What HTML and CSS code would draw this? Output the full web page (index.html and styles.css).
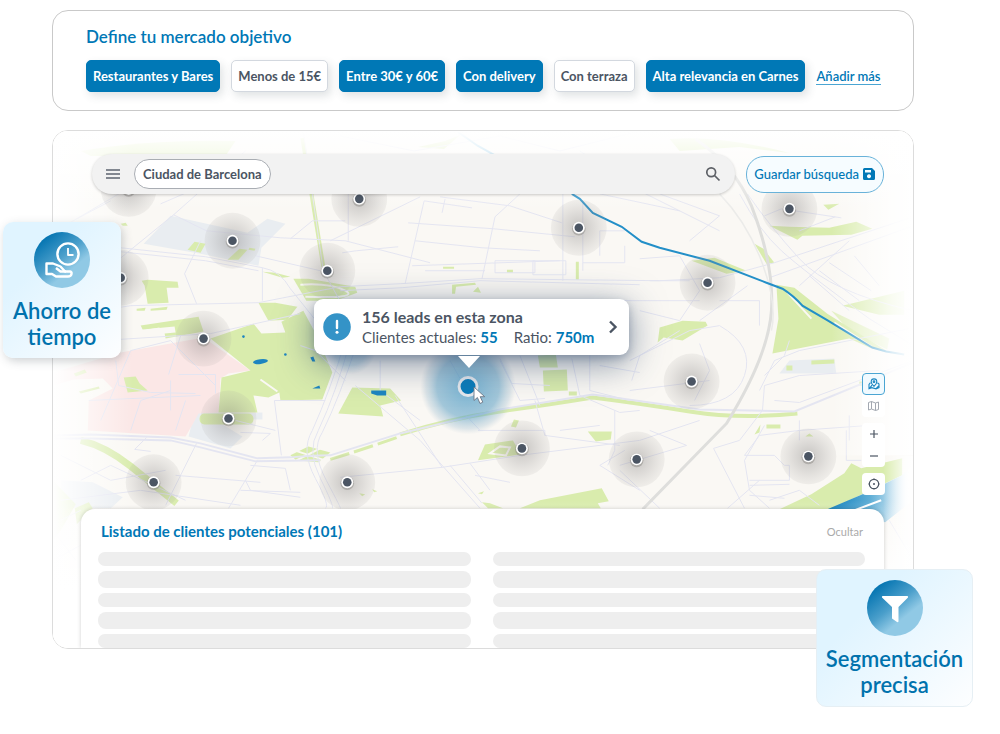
FILE: index.html
```html
<!DOCTYPE html>
<html lang="es">
<head>
<meta charset="utf-8">
<meta name="viewport" content="width=device-width, initial-scale=1">
<title>Mercado objetivo</title>
<link rel="stylesheet" href="styles.css">
</head>
<body>
<main class="page">
  <section class="filters">
    <h1 class="filters-title">Define tu mercado objetivo</h1>
    <div class="filters-row">
      <button type="button" class="pill pill-on">Restaurantes y Bares</button>
      <button type="button" class="pill">Menos de 15€</button>
      <button type="button" class="pill pill-on">Entre 30€ y 60€</button>
      <button type="button" class="pill pill-on">Con delivery</button>
      <button type="button" class="pill">Con terraza</button>
      <button type="button" class="pill pill-on">Alta relevancia en Carnes</button>
      <a class="add-more" href="#">Añadir más</a>
    </div>
  </section>

  <section class="explorer">
    <div class="frame">
      <svg class="map" viewBox="52 130 862 518" preserveAspectRatio="xMidYMin slice" aria-hidden="true">
        <defs>
          <radialGradient id="halo">
            <stop offset="0" stop-color="#6f6c6c" stop-opacity=".38"/>
            <stop offset=".55" stop-color="#8b8888" stop-opacity=".25"/>
            <stop offset="1" stop-color="#a5a2a0" stop-opacity=".13"/>
          </radialGradient>
          <radialGradient id="haloBlue">
            <stop offset="0" stop-color="#4a9cc8" stop-opacity=".75"/>
            <stop offset=".65" stop-color="#5b9fc4" stop-opacity=".55"/>
            <stop offset=".88" stop-color="#8fb4cb" stop-opacity=".28"/>
            <stop offset="1" stop-color="#a9bccb" stop-opacity="0"/>
          </radialGradient>
          <linearGradient id="fadeL"><stop offset="0" stop-color="#fff"/><stop offset=".2" stop-color="#fff" stop-opacity=".8"/><stop offset="1" stop-color="#fff" stop-opacity="0"/></linearGradient>
          <linearGradient id="fadeR"><stop offset="0" stop-color="#fff" stop-opacity="0"/><stop offset=".75" stop-color="#fff" stop-opacity=".85"/><stop offset="1" stop-color="#fff"/></linearGradient>
          <linearGradient id="fadeT" x2="0" y2="1"><stop offset="0" stop-color="#fff"/><stop offset=".35" stop-color="#fff" stop-opacity=".7"/><stop offset="1" stop-color="#fff" stop-opacity="0"/></linearGradient>
          <linearGradient id="fadeB" x2="0" y2="1"><stop offset="0" stop-color="#fff" stop-opacity="0"/><stop offset="1" stop-color="#fff"/></linearGradient>
          <linearGradient id="sea"><stop offset="0" stop-color="#0a7cba"/><stop offset=".5" stop-color="#5faed6"/><stop offset=".95" stop-color="#fff"/></linearGradient>
          <g id="pin">
            <circle r="28" fill="url(#halo)"/>
            <circle r="6.800" cy="1" fill="#8c8986" opacity=".5"/>
            <circle r="6" fill="#fff"/>
            <circle r="4.300" fill="#4b5563"/>
          </g>
        </defs>
        <rect x="52" y="130" width="862" height="518" fill="#faf8f4"/>

        <g fill="#e9edf1">
          <path d="M170 215 247 232 267 218 285 223 261 247 258 265 200 253 143 243Z"/>
          <path d="M194 412h68v7h-10v5h-30l20 12-12 12-42-12Z"/>
          <path d="M780 373 790 360 835 358 837 373Z"/>
          <path d="M60 480 92 482 122 497 110 508 60 508Z"/>
        </g>
        <path fill="#fbe7e6" d="M52 372 120 352 203 337 250 370 228 373 220 378 218 412 198 413 192 424 185 436 87 430 88 400 112 388 102 378 73 379 52 385Z"/>

        <g fill="#d9ecad">
          <path d="M80 150Q150 138 235 140L225 155H90Z" opacity=".9"/>
          <path d="M418 146 445 140 460 134 444 148Z"/>
          <path d="M670 138Q720 134 790 152L740 146 680 150Z"/>
          <path d="M187 249 194 241 205 243 200 252Z"/>
          <path d="M227 259 239 248 247 249 238 259Z"/>
          <path d="M120 223 125 222 127 225 122 225Z"/>
          <path d="M249 247 255 248 254 250 248 249Z"/>
          <path d="M141 280 147 279 177 281 178 287 166 287 168 302 147 303 144 285Z"/>
          <path d="M136 308 145 307 144 310 136 310ZM150 308 167 306 166 309 150 310Z"/>
          <path d="M140 325 198 316 203 331 165 338 164 333 175 332 174 326 142 329Z"/>
          <path d="M258 302 275 302 297 306 287 319 268 320Z"/>
          <path d="M293 278 308 278 355 286 357 292 335 300 306 300Z"/>
          <path d="M262 271 275 272 290 276 282 277Z"/>
          <path d="M210 338 253 323 261 333 285 332 281 321 303 310 318 338 332 372 322 399 280 400 279 392 268 397 253 395 257 412 218 412 221 377 250 370Z"/>
          <rect x="199" y="413" width="54" height="11" rx="5"/>
          <path d="M123 377 135 376 139 383 147 390 127 392Z"/>
          <path d="M73 373 84 369 86 372 75 376ZM78 391 98 386 99 388 80 393Z"/>
          <path d="M352 387 390 388 401 400 380 405 383 416 338 413Z"/>
          <path d="M290 455 308 446 330 452 318 462 296 460Z"/>
          <path d="M538 355 556 354 558 367 540 367ZM543 370 567 369 568 390 544 391ZM569 391 577 391 577 395 569 395Z"/>
          <path d="M511 426 514 419 519 420 516 427ZM588 431 612 431 611 439 596 441Z"/>
          <path d="M478 460 485 444 513 440 521 454Z"/>
          <path d="M520 508 540 500 602 488 609 501 598 503 601 508ZM482 502 490 503 503 508 488 508Z"/>
          <path d="M359 493 365 494 362 496ZM372 489 377 491 374 492ZM478 493 484 491 482 494Z"/>
          <path d="M452 284 475 282 476 284 456 286 455 293 452 293ZM473 291 478 286 481 292Z"/>
          <path d="M443 266h11v2h-11ZM507 269h6v3h-6ZM576 261h3v18h-3Z"/>
          <path d="M770 225 790 226 830 227 857 221 873 228 852 234 803 235 798 239Z"/>
          <path d="M755 243 764 248 775 262 767 263Z"/>
          <path d="M692 260 715 257 747 270 727 273Z"/>
          <path d="M824 204 840 203 829 209Z"/>
          <path d="M777 284 795 287 828 313 887 350 870 347 850 338 773 353 779 318Z"/>
          <path d="M843 305 905 290 905 314 880 314Z"/>
          <path d="M832 310 890 338 888 349 850 330Z" opacity=".7"/>
          <path d="M660 327 683 320 706 321 708 325 683 340 664 337 658 342Z"/>
          <path d="M787 365h6v5h-6ZM812 360 835 359 835 363 812 364Z"/>
          <path d="M755 434 761 424 760 432ZM767 424h14v4h-14ZM806 436 810 433 814 436ZM860 381h5v4h-5Z"/>
          <path d="M780 509 812 494 845 473 852 463 862 468 903 458 903 475 850 500 830 509Z"/>
          <path d="M52 480 75 504 60 530 52 540Z" opacity=".8"/>
          <path d="M74 508 88 502 92 508 76 524Z"/>
        </g>
        <g fill="none" stroke="#d9ecad">
          <path d="M302 137 323 266" stroke-width="4"/>
          <path d="M80 440Q105 446 130 466T176 503" stroke-width="7"/>
          <path d="M330 459Q360 450 400 436" stroke-width="3" stroke-dasharray="20 5"/>
          <path d="M400 434Q450 418 500 411T593 397Q640 403 690 411T798 413" stroke-width="4"/>
        </g>
        <g fill="none" stroke="#faf8f4" stroke-width="2">
          <path d="M146 330 158 328 160 335 148 334M260 379 277 391M300 284Q330 282 345 290T305 296"/>
          <path d="M294 450 325 460M296 460 322 447M490 453 500 446 510 447 506 455Z"/>
          <path d="M788 292 812 318M835 322 872 346"/>
        </g>
        <path fill="url(#sea)" d="M828 509 868 492 903 475 914 465V500L886 522Z"/>
        <path d="M850 512 882 500" stroke="#fff" stroke-width="2"/>

        <g fill="none" stroke="#e4e5f1" stroke-width="1">
          <path d="M52 240 120 247 205 256 262 267Q280 270 290 288L314 318M52 243 120 251 205 260 258 270"/>
          <path d="M52 317 130 305 258 302 340 286 400 283 480 278 660 280 720 277 775 262 914 216M100 340 210 333 300 313M340 290 402 287 480 280 640 284"/>
          <path d="M103 271 173 214 245 150M173 214 206 230 280 237 345 240M76 218 110 200M52 232 140 180M160 203 190 190"/>
          <path d="M290 238 312 220 345 220M255 255 320 270M262 300 262 267M184 273 196 303M184 273 200 240"/>
          <path d="M303 130 323 270 345 310M330 240 420 196M348 190V240M345 240 430 262M342 252 356 250 398 246"/>
          <path d="M424 200 405 283M424 200 472 207M408 222 494 228 575 236M415 240 482 247 540 250M412 265 560 260M520 193 495 216 482 278M440 196 510 205 562 222M445 198 442 212"/>
          <path d="M495 260h40v12h-40ZM533 260h33v14h-33ZM425 270h60M563 193V280M583 200V270M600 255V230H625M583 262H625V245"/>
          <path d="M340 135 414 150 500 135 560 150 640 130M580 150 640 190 720 230M600 193 680 210M660 193 720 215 690 240"/>
          <path d="M740 193Q760 230 782 250T870 318L914 345M748 193Q770 225 800 258T914 310"/>
          <path d="M765 215 782 208 842 217M800 230 836 216M770 277 914 225M810 275 850 310M820 270 860 300M830 262 872 290M855 255 880 285M800 285 850 240"/>
          <path d="M640 258 680 255 700 290 680 320 640 310M650 280H690M720 300H760V325M700 320 748 285"/>
          <path d="M52 435 90 434 170 437 200 443 257 458 290 457Q310 455 330 455L400 433 500 409 593 394 700 409 795 411 914 362M52 438 90 438 170 440 200 447 255 461 320 460" stroke-width="2"/>
          <path d="M345 340Q330 390 312 430Q300 450 315 478T325 508M350 340Q336 392 318 430Q306 450 320 478T332 508M356 345Q340 395 322 432Q310 450 326 480T340 508"/>
          <path d="M274 400 281 455M274 400H325M257 460 228 508M235 420 275 430M240 432 270 433 262 440"/>
          <path d="M100 420 130 350 170 340 215 385M88 400 200 395M115 360 118 385 150 392 195 393M178 374H215V393M168 374 180 335M170 410V380M130 430 140 400 170 390M175 430 185 400"/>
          <path d="M196 443 165 505M146 437 134 449 150 451M60 455 110 480 165 470M80 480 110 465 185 500M60 500 140 490 240 505M175 475 260 482M240 490 300 492M250 465 285 468 290 490M245 480 250 490 300 497"/>
          <path d="M395 395 442 467 340 477M355 385 420 440 480 508M442 467 520 455 640 440 700 420M450 465 482 503M470 463 490 490M475 475 510 482M478 430H545V435M480 430 466 415"/>
          <path d="M535 400 545 435 620 445M520 355 540 405M500 360 520 400 545 398M580 395 620 412 640 410M615 410V450L608 465M600 425 560 430M650 430 687 445 620 465"/>
          <path d="M640 490 600 465 625 450M620 470 660 508M630 360 690 330 720 325Q755 345 745 375T690 405M700 343 710 370 695 400M630 390 710 380"/>
          <path d="M760 390 775 360 800 350 910 328M765 375 785 355 790 340M763 410 765 385 800 375 880 370M775 400 800 402 914 360M763 410 740 440 714 448 745 508M745 455 760 435 800 430 870 425"/>
          <path d="M745 455H775L785 465H790V480H750M750 485 790 484M750 495 785 498M765 425 745 460 750 490 770 508M800 420V440M850 415V440M770 500 800 490 820 505M728 508 760 480M847 430V460H862M680 330 640 355 632 380"/>
          <path d="M380 300H700M300 345 315 350 345 380M380 360V390L420 420M450 360 460 378M500 358 512 383 550 385M590 355V390L630 400M600 365 640 372M572 358 580 395"/>
          <path d="M52 530 75 560M60 520 80 510M52 560 80 545M890 520 914 560"/>
        </g>
        <path d="M696 138Q735 165 752 205Q775 265 772 310T727 423L643 509" fill="none" stroke="#dededc" stroke-width="3"/>
        <path d="M720 193Q748 222 763 263T772 330" fill="none" stroke="#ebebe9" stroke-width="1.500"/>
        <path d="M572 193 580 198 593 212 622 226 642 241 660 247 710 260 767 282 783 288Q794 295 803 305L827 319 873 347 887 351 905 354" fill="none" stroke="#238fc8" stroke-width="2"/>
        <path d="M458 131 478 145 496 155" fill="none" stroke="#7cc0e4" stroke-width="2"/>
        <g fill="#1d85c0">
          <ellipse cx="260" cy="361" rx="7.500" ry="2.400" transform="rotate(-8 260 361)"/>
          <circle cx="243" cy="336" r="1.300"/><circle cx="285" cy="354" r="1.300"/>
          <path d="M310 357 313 356 315 361 312 361ZM312 388 319 385 320 388ZM371 390 386 390 386 395 377 395 371 393Z"/>
        </g>

        <rect x="52" y="130" width="80" height="518" fill="url(#fadeL)"/>
        <rect x="832" y="130" width="82" height="325" fill="url(#fadeR)"/>
        <rect x="884" y="455" width="30" height="193" fill="url(#fadeR)"/>
        <rect x="52" y="130" width="862" height="80" fill="url(#fadeT)"/>
        <rect x="52" y="500" width="862" height="90" fill="url(#fadeB)"/>
        <rect x="52" y="590" width="862" height="62" fill="#fff"/>

        <use href="#pin" x="128" y="188"/><use href="#pin" x="232" y="240"/><use href="#pin" x="327" y="270"/>
        <use href="#pin" x="359" y="198"/><use href="#pin" x="579" y="227"/><use href="#pin" x="790" y="208"/>
        <use href="#pin" x="708" y="282"/><use href="#pin" x="203" y="338"/><use href="#pin" x="120" y="277"/>
        <use href="#pin" x="692" y="381"/><use href="#pin" x="637" y="459"/><use href="#pin" x="809" y="456"/>
        <use href="#pin" x="228" y="418"/><use href="#pin" x="153" y="482"/><use href="#pin" x="347" y="482"/>
        <use href="#pin" x="522" y="448"/>
        <circle cx="350" cy="348" r="26" fill="url(#haloBlue)" opacity=".5"/>
        <circle cx="468" cy="386" r="48" fill="url(#haloBlue)"/>
        <circle cx="468" cy="386" r="9" fill="#0a7cba" stroke="#e6e9ee" stroke-width="3"/>
      </svg>

      <div class="topbar">
        <form class="search" role="search">
          <button type="button" class="icon-btn" aria-label="Menú">
            <svg width="14" height="10" viewBox="0 0 14 10" stroke="#5d6470" stroke-width="1.400"><path d="M0 1h14M0 5h14M0 9h14"/></svg>
          </button>
          <button type="button" class="city">Ciudad de Barcelona</button>
          <input class="search-input" type="search" aria-label="Buscar zona">
          <button type="button" class="icon-btn" aria-label="Buscar">
            <svg width="16" height="16" viewBox="0 0 16 16" fill="none" stroke="#5d6066" stroke-width="1.700"><circle cx="6.200" cy="6.200" r="4.400"/><path d="m9.500 9.500 5 5"/></svg>
          </button>
        </form>
        <button type="button" class="save">Guardar búsqueda
          <svg width="12" height="12" viewBox="0 0 12 12"><path fill="#0078b6" fill-rule="evenodd" d="M1.500 0H9l3 3v7.500q0 1.500-1.500 1.500h-9Q0 12 0 10.500v-9Q0 0 1.500 0ZM2 2v2.500h6V2ZM6 6.300a2 2 0 1 0 .01 0Z"/></svg>
        </button>
      </div>

      <div class="stage">
        <div class="tools">
          <div class="tool-group">
            <button type="button" class="tool tool-on" aria-label="Mapa de zonas">
              <svg width="12" height="12" viewBox="0 0 12 12" fill="none" stroke="#1b86c1" stroke-width="1.100"><path d="M6 8.300C4 6.500 3.200 5.300 3.200 3.700a2.800 2.800 0 0 1 5.600 0C8.800 5.300 8 6.500 6 8.300Z"/><circle cx="6" cy="3.700" r=".8"/><path d="M2.500 4.700 1 6.500v4.200l2.800-1 4.200 1.200 3-1.200V6L9.400 4.700M1.500 10.300 4 7.200M8 10.700 10.700 8"/></svg>
            </button>
            <button type="button" class="tool" aria-label="Mapa">
              <svg width="11" height="10" viewBox="0 0 11 10" fill="none" stroke="#a3a8b1" stroke-width="1"><path d="m.5 1.500 3-1 4 1.500 3-1v7.500l-3 1-4-1.500-3 1ZM3.500.5V8M7.500 2v7.500"/></svg>
            </button>
          </div>
          <div class="tool-group">
            <button type="button" class="tool" aria-label="Acercar">
              <svg width="8" height="8" viewBox="0 0 8 8" stroke="#4b5563" stroke-width="1.200"><path d="M4 0v8M0 4h8"/></svg>
            </button>
            <button type="button" class="tool" aria-label="Alejar">
              <svg width="8" height="8" viewBox="0 0 8 8" stroke="#4b5563" stroke-width="1.200"><path d="M0 4h8"/></svg>
            </button>
          </div>
          <div class="tool-group">
            <button type="button" class="tool" aria-label="Centrar">
              <svg width="12" height="12" viewBox="0 0 12 12" fill="none" stroke="#4b5563" stroke-width="1.200"><circle cx="6" cy="6" r="4.700"/><circle cx="6" cy="6" r="1" fill="#4b5563" stroke="none"/><path d="M6 .5v1.500M6 10v1.500M.5 6H2M10 6h1.500"/></svg>
            </button>
          </div>
        </div>

        <div class="popup">
          <svg class="popup-icon" width="28" height="28" viewBox="0 0 28 28"><circle cx="14" cy="14" r="13.800" fill="#3493c7"/><path d="M14 8v7" stroke="#fff" stroke-width="2.400" stroke-linecap="round"/><circle cx="14" cy="19.300" r="1.500" fill="#fff"/></svg>
          <div class="popup-text">
            <strong class="popup-title">156 leads en esta zona</strong>
            <div class="popup-stats"><span>Clientes actuales: <b>55</b></span><span>Ratio: <b>750m</b></span></div>
          </div>
          <button type="button" class="icon-btn" aria-label="Ver zona">
            <svg width="10" height="14" viewBox="0 0 10 14" fill="none" stroke="#4b5563" stroke-width="2.400"><path d="m2 1.500 5.500 5.500L2 12.500"/></svg>
          </button>
        </div>
        <svg class="cursor" width="16" height="20" viewBox="0 0 16 20"><path d="M2 1v13.500l3.400-3 2.600 6 2.800-1.300-2.600-5.500h4.500Z" fill="#fff" stroke="#6b7686" stroke-width=".9" stroke-linejoin="round"/></svg>
      </div>

      <div class="list">
        <div class="list-head">
          <h2 class="list-title">Listado de clientes potenciales (101)</h2>
          <button type="button" class="hide-btn">Ocultar</button>
        </div>
        <div class="list-cols">
          <div class="list-col"><span class="bar"></span><span class="bar bar-tall"></span><span class="bar"></span><span class="bar bar-tall"></span><span class="bar"></span></div>
          <div class="list-col"><span class="bar"></span><span class="bar bar-tall"></span><span class="bar"></span><span class="bar bar-tall"></span><span class="bar"></span></div>
        </div>
      </div>
    </div>

    <aside class="badge badge-time">
      <svg width="56" height="56" viewBox="0 0 56 56">
        <defs><linearGradient id="disc" x1=".15" y1=".1" x2=".75" y2=".85"><stop offset="0" stop-color="#0072b0"/><stop offset=".5" stop-color="#4b9fcb"/><stop offset=".8" stop-color="#90c9e5"/></linearGradient></defs>
        <circle cx="28" cy="28" r="28" fill="url(#disc)"/>
        <g fill="none" stroke="#fff" stroke-width="2.400" stroke-linejoin="round"><circle cx="34" cy="22" r="10.600"/><path d="M34 16v7h5.500" stroke-width="1.800"/><path d="M12.500 31.500H19L26.500 34.500 31 39.500H36Q38 40 37.500 42 37 44.500 34 44.500H22L18 42H12.500Z"/><path d="M22 36 26.500 39.500H32"/></g>
      </svg>
      <p class="badge-text">Ahorro de tiempo</p>
    </aside>
    <aside class="badge badge-segment">
      <svg width="56" height="56" viewBox="0 0 56 56"><circle cx="28" cy="28" r="28" fill="url(#disc)"/><path d="M15.500 16h25q1 .5.500 1.500L31.500 27v14.500q-.5 1-1.500.5l-5-3.500V27L15 17.500q-.5-1 .5-1.500Z" fill="#fff"/></svg>
      <p class="badge-text">Segmentación precisa</p>
    </aside>
  </section>
</main>
</body>
</html>
```
FILE: styles.css
```css
* { box-sizing: border-box; }

body {
  margin: 0;
  background: #fff;
  color: #4b5563;
  font-family: Lato, "Liberation Sans", sans-serif;
}

h1, h2, p { margin: 0; }

button {
  margin: 0;
  padding: 0;
  border: 0;
  background: none;
  color: inherit;
  font: inherit;
  cursor: pointer;
}

svg { display: block; flex: none; }

.page {
  display: flex;
  flex-direction: column;
  gap: 19px;
  padding: 10px 86px 84px 52px;
}

.filters {
  padding: 14px 20px 18px 33px;
  border: 1px solid #c9c9c9;
  border-radius: 16px;
}

.filters-title {
  margin-bottom: 11px;
  color: #0078b6;
  font-size: 17px;
  font-weight: 600;
  line-height: 24px;
}

.filters-row {
  display: flex;
  flex-wrap: wrap;
  align-items: center;
  gap: 11px;
}

.pill {
  padding: 0 6px;
  border: 1px solid #d3d8df;
  border-radius: 5px;
  background: #fff;
  box-shadow: 3px 4px 8px rgba(60, 80, 90, .16);
  font-size: 13px;
  font-weight: 700;
  line-height: 30px;
  white-space: nowrap;
}

.pill-on {
  border-color: #0078b6;
  background: #0078b6;
  color: #fff;
}

.add-more {
  border-bottom: 1px solid #4aa5d3;
  color: #0078b6;
  font-size: 13px;
  font-weight: 600;
  line-height: 16px;
  text-decoration: none;
  white-space: nowrap;
}

.explorer { position: relative; }

.frame {
  position: relative;
  overflow: hidden;
  border: 1px solid #dcdcdc;
  border-radius: 16px;
}

.map {
  position: absolute;
  inset: 0;
  width: 100%;
  height: 100%;
}

.topbar {
  position: relative;
  display: flex;
  align-items: center;
  gap: 11px;
  padding: 23px 29px 0 39px;
}

.search {
  display: flex;
  flex: 1;
  align-items: center;
  min-width: 0;
  height: 40px;
  padding: 0 14px;
  border-radius: 20px;
  background: #f2f2f2;
  box-shadow: 0 1px 3px rgba(0, 0, 0, .2);
}

.icon-btn {
  display: flex;
  flex: none;
  align-items: center;
}

.city {
  margin-left: 14px;
  padding: 0 8px;
  border: 1px solid #a9adb3;
  border-radius: 15px;
  background: #fff;
  font-size: 13px;
  font-weight: 700;
  line-height: 28px;
  white-space: nowrap;
}

.search-input {
  flex: 1;
  min-width: 0;
  border: 0;
  outline: 0;
  background: none;
  font: inherit;
}

.save {
  display: flex;
  align-items: center;
  gap: 4px;
  padding: 0 8px 0 7px;
  border: 1px solid #69b2d9;
  border-radius: 18px;
  background: #f6fcff;
  color: #0078b6;
  font-size: 13px;
  font-weight: 500;
  line-height: 35px;
  white-space: nowrap;
}

.stage {
  position: relative;
  display: flex;
  align-items: flex-end;
  justify-content: flex-end;
  height: 315px;
  padding: 0 28px 14px 0;
}

.tools {
  display: flex;
  flex-direction: column;
  gap: 6px;
}

.tool-group {
  display: flex;
  flex-direction: column;
  border-radius: 4px;
  background: #fff;
}

.tool {
  display: flex;
  align-items: center;
  justify-content: center;
  width: 23px;
  height: 22px;
}

.tool-on {
  border: 1px solid #4aa5d3;
  border-radius: 4px;
  background: #f1faff;
}

.popup {
  position: absolute;
  top: 105px;
  left: 261px;
  display: flex;
  align-items: center;
  width: 315px;
  height: 56px;
  padding: 0 11px 0 9px;
  border-radius: 9px;
  background: #fff;
  box-shadow: 0 8px 36px rgba(45, 70, 105, .6), 0 3px 8px rgba(45, 70, 105, .3);
}

.popup::after {
  content: "";
  position: absolute;
  top: 57px;
  left: 144px;
  border: 11px solid transparent;
  border-top: 12px solid #fff;
  border-bottom: 0;
}

.popup-text {
  flex: 1;
  margin-left: 11px;
  white-space: nowrap;
}

.popup-title {
  display: block;
  font-size: 16px;
  line-height: 20px;
}

.popup-stats {
  display: flex;
  gap: 16px;
  font-size: 15px;
  line-height: 20px;
}

.popup-stats b { color: #0078b6; }

.cursor {
  position: absolute;
  top: 192px;
  left: 419px;
}

.list {
  position: relative;
  margin: 0 29px 0 28px;
  padding: 11px 19px 0 17px;
  border-radius: 14px 14px 0 0;
  background: #fff;
  box-shadow: 0 0 4px rgba(0, 0, 0, .18);
}

.list-head {
  display: flex;
  align-items: center;
  justify-content: space-between;
  margin-bottom: 10px;
  padding: 0 2px 0 3px;
}

.list-title {
  color: #0078b6;
  font-size: 15px;
  font-weight: 700;
  line-height: 22px;
}

.hide-btn {
  color: #aaa;
  font-size: 11px;
}

.list-cols {
  display: grid;
  grid-template-columns: 1fr 1fr;
  gap: 22px;
}

.list-col {
  display: flex;
  flex-direction: column;
  gap: 5px;
}

.bar {
  height: 14px;
  border-radius: 8px;
  background: #eee;
}

.bar-tall { height: 17px; }

.badge {
  position: absolute;
  display: flex;
  flex-direction: column;
  align-items: center;
  gap: 10px;
  padding: 10px 8px 8px;
  border-radius: 10px;
  background: linear-gradient(135deg, #e0f4ff 30%, #fdfeff);
  text-align: center;
}

.badge-time {
  top: 92px;
  left: -49px;
  width: 118px;
  box-shadow: 2px 3px 10px rgba(60, 70, 80, .25);
}

.badge-segment {
  top: 439px;
  right: -59px;
  width: 157px;
  border: 1px solid #e6eff4;
}

.badge-text {
  color: #0072ad;
  font-size: 22px;
  font-weight: 600;
  line-height: 26px;
}
```
